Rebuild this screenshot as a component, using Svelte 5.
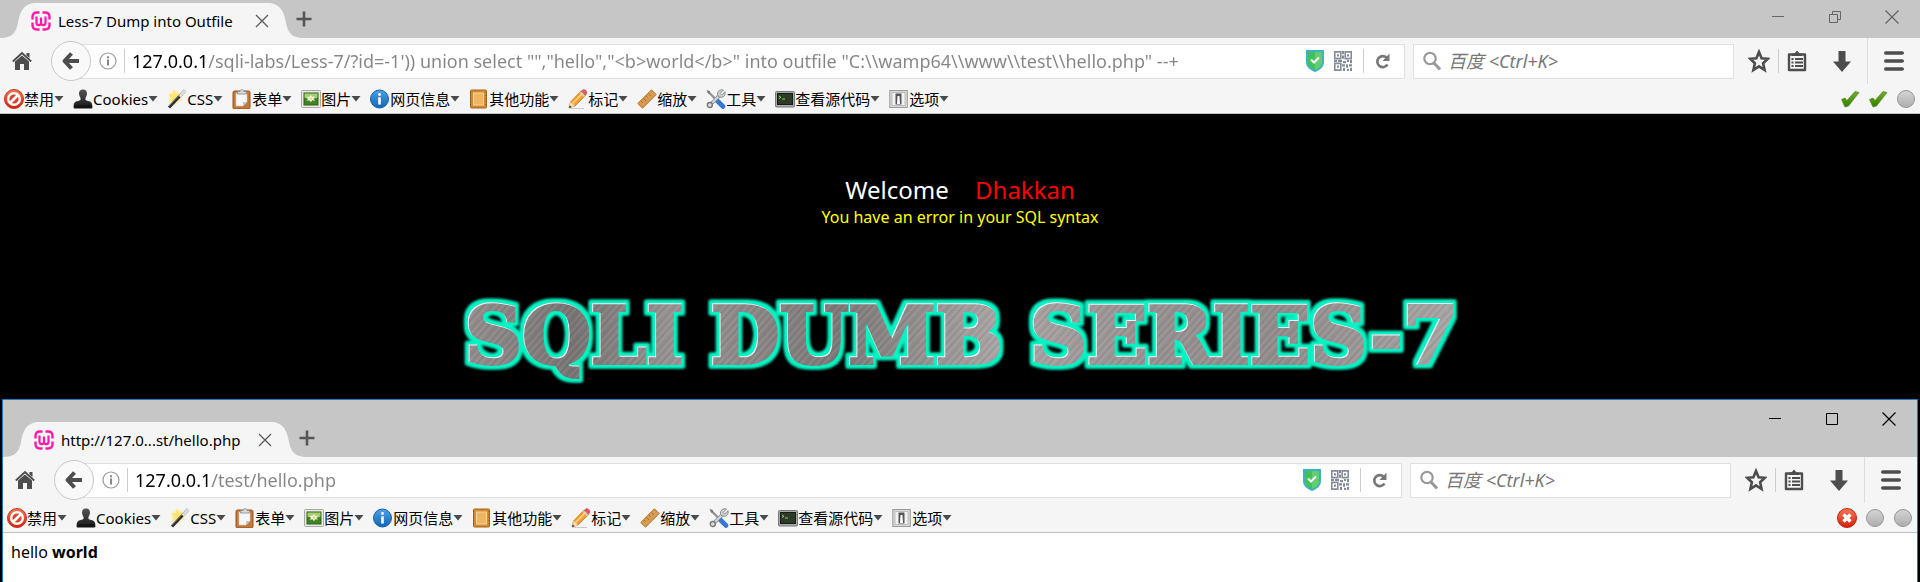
<script>
  const tools = [
    ['ban', '禁用'],
    ['user', 'Cookies'],
    ['wand', 'CSS'],
    ['form', '表单'],
    ['image', '图片'],
    ['info', '网页信息'],
    ['book', '其他功能'],
    ['pencil', '标记'],
    ['ruler', '缩放'],
    ['wrench', '工具'],
    ['terminal', '查看源代码'],
    ['switch', '选项']
  ];
</script>

{#snippet glyph(name)}
  <svg class="glyph" viewBox="0 0 20 20" width="20" height="20" aria-hidden="true">
    {#if name === 'ban'}
      <circle cx="10" cy="10" r="9.5" fill="url(#red)" stroke="#c4361f" />
      <circle cx="10" cy="10" r="5.8" fill="#d9452c" stroke="#fff" stroke-width="2.4" />
      <path d="M6 14L14 6" stroke="#fff" stroke-width="2.6" />
    {:else if name === 'user'}
      <path d="M10 0.5c3 0 4.2 2 4 4.5-.2 2-1.4 3.2-1.6 4.6-.1 1.6.4 2 2.6 2.4 3.4.5 4.4 2.2 4.4 6.2 0 1-.4 1.3-1.4 1.3H2c-1 0-1.4-.3-1.4-1.3 0-4 1-5.7 4.4-6.2 2.2-.4 2.7-.8 2.6-2.4C7.4 8.2 6.2 7 6 5c-.2-2.5 1-4.5 4-4.5z" fill="url(#dark)" />
      <path d="M2 17.5h16" stroke="#111" stroke-width="2" />
    {:else if name === 'wand'}
      <circle cx="8" cy="8" r="8" fill="url(#spark)" />
      <path d="M7 0l2 5 5-1-3 4 4 4-5-1-2 6-2-5-5 2 3-5-3-4 5 0z" fill="#ffe36a" opacity=".8" />
      <path d="M2 18.5L18 1.5" stroke="#2f2f2f" stroke-width="3" />
      <path d="M12.5 7.5L18.5 1" stroke="#ddd" stroke-width="3" />
      <path d="M2 17L12 6.5" stroke="#888" stroke-width=".8" />
    {:else if name === 'form'}
      <rect x="1" y="2" width="17" height="18" rx="1.5" fill="#c2793a" stroke="#99531c" />
      <path d="M4 4h11v9l-4 4H4z" fill="#f7f7f7" stroke="#cfcfcf" stroke-width=".6" />
      <path d="M11 17v-4h4z" fill="#bfc3c6" />
      <path d="M5.5 5V2.5h2.5C8 0 12 0 12 2.5h2.5V5z" fill="#d8d8d8" stroke="#888" stroke-width=".8" />
    {:else if name === 'image'}
      <rect x=".5" y="1.5" width="19" height="17" rx="1" fill="#e8e8e6" stroke="#a9aaa5" />
      <rect x="3" y="4" width="14" height="12" fill="#3f8420" stroke="#2e6218" />
      <path d="M3.5 4.5h13v4c-4 2-9 2-13 0z" fill="#a5ce72" />
      <path d="M10 6l1 2 3-.5-2 2 2 2-3-.3-1 2-1.5-2-3 .5 2-2-2-2 3 .3z" fill="#fff" />
      <circle cx="10" cy="9.5" r="1.3" fill="#f5d53a" />
    {:else if name === 'info'}
      <circle cx="9.5" cy="10" r="9" fill="url(#blue)" stroke="#1463ad" />
      <circle cx="9.5" cy="5.5" r="1.4" fill="#fff" />
      <path d="M9.5 8.3v7.2" stroke="#fff" stroke-width="2.6" />
    {:else if name === 'book'}
      <rect x="1.5" y="1" width="16" height="18" rx="1" fill="#d38a34" stroke="#a9651c" />
      <rect x="4.5" y="4" width="10" height="12" fill="#efb562" stroke="#f9d596" />
      <path d="M1.5 3v14M17 3v14" stroke="#8f5212" stroke-dasharray="1 2" />
    {:else if name === 'pencil'}
      <path d="M2 19.5h14" stroke="#ccc" />
      <path d="M1 19l1.5-6L13 2l4.5 4.5L7 17z" fill="#f4a02c" stroke="#c56a11" stroke-width=".7" />
      <path d="M4.5 14.5L15 4" stroke="#ffd588" stroke-width="1.6" />
      <path d="M1 19l1.5-6L7 17z" fill="#f2dcbc" />
      <path d="M1 19l.8-2.6 1.7 1.7z" fill="#222" />
      <path d="M13 2l2-1.5c2-1 5 2 4 4L17.5 6.500z" fill="#d9586c" />
      <path d="M12 3l4.5 4.5" stroke="#d5d5d5" stroke-width="1.5" />
    {:else if name === 'ruler'}
      <path d="M.8 14.5L14.500.8l4.700 4.700L5.500 19.200z" fill="#d99a52" stroke="#b47327" />
      <path d="M4 12l1.5 1.5M6.5 9.5L9 12M9 7l1.5 1.5M11.5 4.5L14 7" stroke="#9a5d1c" stroke-width=".8" />
    {:else if name === 'wrench'}
      <path d="M2 2.5L10.5 11" stroke="#8d9192" stroke-width="2.2" />
      <path d="M10.5 11l6.5 6.5" stroke="#3578cf" stroke-width="4.6" stroke-linecap="round" />
      <path d="M4 16L14.5 5.5" stroke="#8b9092" stroke-width="3.6" />
      <path d="M4 16L14.5 5.5" stroke="#d5d8d8" stroke-width="1.8" />
      <circle cx="3.8" cy="16" r="2.5" fill="#ddd" stroke="#777" stroke-width="1.4" />
      <path d="M17.5 1l-3.3 3.4 1.6 1.6L19 2.700c.8 3-1 5.600-3.800 5.600-3 0-4.300-2.200-3.600-4.600C12.300 1.300 15 .2 17.500 1z" fill="#cfd2d2" stroke="#777" stroke-width=".8" />
      <path d="M.5.8l3.5 1.5 0 2-1.6.5z" fill="#777" />
    {:else if name === 'terminal'}
      <rect x=".5" y="2.5" width="19" height="15.5" rx="1" fill="#a9aaab" stroke="#77797a" />
      <rect x="2.5" y="4.5" width="15" height="11" fill="#2c3a27" stroke="#161d14" />
      <path d="M4 7l2 1.3L4 9.5M7 10h3" fill="none" stroke="#85d649" />
    {:else}
      <rect x=".8" y="1.5" width="17.5" height="17" fill="#d9d9d9" stroke="#9c9c9c" />
      <rect x="3" y="3.5" width="13" height="13" fill="#f3f3f3" stroke="#bebebe" />
      <rect x="6.5" y="4.5" width="6" height="11" fill="#555" />
      <path d="M8 15l.5-8h2l.5 8z" fill="#fff" />
    {/if}
  </svg>
{/snippet}

{#snippet light(kind)}
  <svg class="glyph" viewBox="0 0 20 20" width="20" height="20" role="img" aria-label={kind}>
    {#if kind === 'ok'}
      <path d="M1.5 10.5l3.500-1.500 2 2.500L15 2.500l4 1L8.500 17 5 18z" fill="url(#green)" stroke="#4a8a14" stroke-width=".7" />
    {:else if kind === 'error'}
      <circle cx="10" cy="10" r="9.5" fill="url(#red)" stroke="#c5200c" />
      <path d="M6.5 6.5l7 7M13.5 6.5l-7 7" stroke="#fff" stroke-width="3.4" />
    {:else}
      <circle cx="10" cy="10" r="8.5" fill="url(#silver)" stroke="#969696" />
    {/if}
  </svg>
{/snippet}

{#snippet browser(title, host, path, lights, active)}
  <header class="strip" class:tall={active}>
    <div class="tab">
      <svg class="cap" viewBox="0 0 37 35" width="37" height="35" aria-hidden="true">
        <path d="M0 35C12 35 16 30 18 20C20 8 24 0 37 0V35z" fill="#f5f5f5" />
      </svg>
      <div class="face">
        <svg class="fav" viewBox="0 0 20 20" width="20" height="20" aria-hidden="true">
          <path d="M8.5 1.5H6C3 1.5 1.5 3 1.5 6v2.5M11.5 1.5H14c3 0 4.5 1.5 4.5 4.5v2.5M1.5 11.5V14c0 3 1.5 4.5 4.5 4.5h2.5M18.5 11.5V14c0 3-1.5 4.5-4.5 4.5h-2.5" fill="none" stroke="#ff1aa8" stroke-width="2.4" />
          <path d="M5.5 5.500v6c0 3.500 4.500 3.500 4.500 0V6.500v5c0 3.500 4.500 3.500 4.500 0v-6" fill="none" stroke="#ff1aa8" stroke-width="2.2" />
        </svg>
        <span class="title">{title}</span>
        <button class="bare" aria-label="Close tab">
          <svg viewBox="0 0 14 14" width="14" height="14"><path d="M1 1l12 12M13 1L1 13" stroke="#5a5a5a" stroke-width="1.3" /></svg>
        </button>
      </div>
      <svg class="cap" viewBox="0 0 37 35" width="37" height="35" aria-hidden="true">
        <path d="M37 35C25 35 21 30 19 20C17 8 13 0 0 0V35z" fill="#f5f5f5" />
      </svg>
    </div>
    <button class="bare plus" aria-label="New tab">
      <svg viewBox="0 0 16 16" width="16" height="16"><path d="M8 .5v15M.5 8h15" stroke="#555" stroke-width="2.6" /></svg>
    </button>
    <div class="caption" class:dim={!active}>
      <button class="bare" aria-label="Minimize"><svg viewBox="0 0 14 14" width="14" height="14"><path d="M1 6.5h12" stroke="currentColor" /></svg></button>
      <button class="bare" aria-label="Resize">
        <svg viewBox="0 0 14 14" width="14" height="14" fill="none" stroke="currentColor">
          {#if active}<path d="M1.5 1.5h11v11h-11z" />{:else}<path d="M1.5 4.5h8v8h-8zM4.5 4V1.5h8v8H10" />{/if}
        </svg>
      </button>
      <button class="bare" aria-label="Close"><svg viewBox="0 0 14 14" width="14" height="14"><path d="M.5.5l13 13M13.5.5l-13 13" stroke="currentColor" stroke-width="1.2" /></svg></button>
    </div>
  </header>

  <nav class="nav">
    <button class="bare home" aria-label="Home">
      <svg viewBox="0 0 20 20" width="20" height="20"><path d="M.8 10.5L10 2l9.2 8.5" fill="none" stroke="#4d4d4d" stroke-width="1.8" /><path d="M14.5 2h3v5l-3-2.5zM3 10.5L10 4.5l7 6V19h-5v-6H8v6H3z" fill="#4d4d4d" /></svg>
    </button>
    <button class="back" aria-label="Back">
      <svg viewBox="0 0 20 20" width="20" height="20"><path d="M10.5 2.5L3.5 10l7 7.5M4.5 10H18" fill="none" stroke="#4d4d4d" stroke-width="4" stroke-linejoin="round" /></svg>
    </button>
    <div class="field address">
      <svg viewBox="0 0 18 18" width="18" height="18" aria-hidden="true"><circle cx="9" cy="9" r="8" fill="none" stroke="#999" stroke-width="1.2" /><path d="M9 7.5v6M9 4.2v2" stroke="#888" stroke-width="2" /></svg>
      <i class="bar"></i>
      <input class="url" aria-label="Address" value={host + path} />
      <svg viewBox="0 0 18 22" width="18" height="22" aria-hidden="true"><path d="M0 0h18v12c0 5-4 8-9 10-5-2-9-5-9-10z" fill="#3cb3c3" /><path d="M2 2h14v10c0 4-3 6-7 8-4-2-7-4-7-8z" fill="#41c05b" /><path d="M9 2h7v10c0 4-3 6-7 8z" fill="#63cd6f" /><path d="M5 9.5l3 3 5-5" fill="none" stroke="#fff" stroke-width="2" /></svg>
      <svg class="qr" viewBox="0 0 18 18" width="18" height="20" preserveAspectRatio="none" aria-hidden="true">
        <g fill="none" stroke="#858c98" stroke-width="1.6"><path d="M.8.8h6v6h-6zM11.2.8h6v6h-6zM.8 11.2h6v6h-6z" /></g>
        <path d="M3 3h2v2H3zM13 3h2v2h-2zM3 13h2v2H3zM8 0h2v3H8zM8 4h2v3H8zM0 8h3v2H0zM4 8h4v2H4zM9 9h3v2H9zM13 8h2v2h-2zM16 8h2v3h-2zM8 12h3v2H8zM12 12h2v3h-2zM15 12h3v2h-3zM9 15h2v3H9zM13 16h2v2h-2zM16 15h2v3h-2z" fill="#858c98" />
      </svg>
      <i class="bar"></i>
      <button class="bare reload" aria-label="Reload">
        <svg viewBox="0 0 16 18" width="16" height="18"><path d="M12.5 12.5A5.5 5.5 0 1 1 11.5 5.5" fill="none" stroke="#777" stroke-width="2.6" /><path d="M14.5 1.5V9H7.5z" fill="#777" /></svg>
      </button>
    </div>
    <div class="field search">
      <svg viewBox="0 0 18 20" width="18" height="20" aria-hidden="true"><circle cx="7" cy="7.5" r="5.7" fill="none" stroke="#999" stroke-width="2.2" /><path d="M11 12l6 6.5" stroke="#999" stroke-width="3" /></svg>
      <input class="find" aria-label="Search" placeholder="百度 <Ctrl+K>" />
    </div>
    <div class="actions">
      <button class="bare star" aria-label="Bookmark">
        <svg viewBox="0 0 22 24" width="22" height="24"><path d="M11 3l2.600 6.300 6.200.5-4.700 4.400 1.500 6.800L11 17.400 5.400 21l1.500-6.800L2.200 9.800l6.200-.5z" fill="none" stroke="#4d4d4d" stroke-width="2.6" /></svg>
      </button>
      <i class="bar small"></i>
      <button class="bare clip" aria-label="Bookmarks list">
        <svg viewBox="0 0 20 22" width="20" height="22"><path d="M2 4.5h16v15.5H2z" fill="none" stroke="#4d4d4d" stroke-width="2.4" stroke-linejoin="round" /><path d="M5 6V3.5h2.5L10 .5l2.5 3H15V6z" fill="#4d4d4d" /><path d="M4.5 9h2M8 9h8M4.5 12.5h2M8 12.5h8M4.5 16h2M8 16h8" stroke="#4d4d4d" stroke-width="2" /></svg>
      </button>
      <button class="bare down" aria-label="Downloads">
        <svg viewBox="0 0 18 22" width="18" height="22"><path d="M5.5 1h7v10.5H18L9 22 0 11.5h5.5z" fill="#4d4d4d" /></svg>
      </button>
      <i class="bar long"></i>
      <button class="bare menu" aria-label="Menu">
        <svg viewBox="0 0 20 20" width="20" height="20"><path d="M1.8 2h16.400M1.800 10h16.400M1.800 18h16.400" stroke="#4d4d4d" stroke-width="3.6" stroke-linecap="round" /></svg>
      </button>
    </div>
  </nav>

  <div class="tools">
    {#each tools as [icon, label]}
      <button class="tool">
        {@render glyph(icon)}<span>{label}</span>
        <svg class="arrow" viewBox="0 0 10 6" width="10" height="6" aria-hidden="true"><path d="M.5 0h9L5 5.5z" fill="#4a4a4a" /></svg>
      </button>
    {/each}
    <div class="lights">
      {#each lights as kind}{@render light(kind)}{/each}
    </div>
  </div>
{/snippet}

<svg class="defs" width="0" height="0" aria-hidden="true">
  <defs>
    <linearGradient id="red" x2="0" y2="1"><stop stop-color="#f47a55" /><stop offset="1" stop-color="#d3200c" /></linearGradient>
    <linearGradient id="dark" x2="0" y2="1"><stop stop-color="#555" /><stop offset="1" stop-color="#151515" /></linearGradient>
    <linearGradient id="blue" x2="0" y2="1"><stop stop-color="#4ea1e6" /><stop offset="1" stop-color="#1165b6" /></linearGradient>
    <linearGradient id="green" x2="0" y2="1"><stop stop-color="#74ad30" /><stop offset="1" stop-color="#337f00" /></linearGradient>
    <linearGradient id="silver" x2="0" y2="1"><stop stop-color="#d6d6d6" /><stop offset="1" stop-color="#adadad" /></linearGradient>
    <radialGradient id="spark"><stop stop-color="#ffe04d" /><stop offset="1" stop-color="#ffe97a" stop-opacity="0" /></radialGradient>
  </defs>
</svg>

<div class="desk">
  <section class="rear">
    {@render browser('Less-7 Dump into Outfile', '127.0.0.1', `/sqli-labs/Less-7/?id=-1')) union select "","hello","<b>world</b>" into outfile "C:\\\\wamp64\\\\www\\\\test\\\\hello.php" --+`, ['ok', 'ok', 'idle'], false)}
    <main class="lab">
      <p class="welcome">Welcome <span>Dhakkan</span></p>
      <p class="error">You have an error in your SQL syntax</p>
      <h1>
        <svg viewBox="0 0 1020 110" width="1020" height="110">
          <defs>
            <linearGradient id="steel" x2="1" y2="0">
              <stop stop-color="#969090" /><stop offset=".12" stop-color="#787373" /><stop offset=".22" stop-color="#989292" />
              <stop offset=".38" stop-color="#7c7777" /><stop offset=".54" stop-color="#aaa4a4" /><stop offset=".68" stop-color="#969090" />
              <stop offset=".82" stop-color="#918b8b" /><stop offset="1" stop-color="#aaa6a6" />
            </linearGradient>
            <pattern id="brush" width="17" height="300" patternUnits="userSpaceOnUse" patternTransform="rotate(42)">
              <path d="M1 0v300M6 0v300M13 0v300" stroke="#fff" stroke-opacity=".13" />
              <path d="M3.5 0v300M10 0v300M15 0v300" stroke="#222" stroke-opacity=".1" />
            </pattern>
            <pattern id="metal" width="1020" height="110" patternUnits="userSpaceOnUse">
              <rect width="1020" height="110" fill="url(#steel)" />
              <rect width="1020" height="110" fill="url(#brush)" />
            </pattern>
            <filter id="neon" x="0" y="0" width="1020" height="110" filterUnits="userSpaceOnUse" color-interpolation-filters="sRGB">
              <feMorphology in="SourceAlpha" operator="dilate" radius="3" result="fat" />
              <feGaussianBlur in="fat" stdDeviation="1.7" result="soft" />
              <feFlood flood-color="#00f5c4" />
              <feComposite in2="soft" operator="in" result="glow" />
              <feOffset in="SourceAlpha" dx="1" dy="1" result="shift" />
              <feFlood flood-color="#e8ffff" />
              <feComposite in2="SourceAlpha" operator="in" result="white" />
              <feComposite in="white" in2="shift" operator="out" result="edge" />
              <feMerge><feMergeNode in="glow" /><feMergeNode in="glow" /><feMergeNode in="SourceGraphic" /><feMergeNode in="edge" /></feMerge>
            </filter>
          </defs>
          <text x="511" y="76" text-anchor="middle" filter="url(#neon)">SQLI DUMB SERIES-7</text>
        </svg>
      </h1>
    </main>
  </section>
  <section class="front">
    {@render browser('http://127.0...st/hello.php', '127.0.0.1', '/test/hello.php', ['error', 'idle', 'idle'], true)}
    <main class="plain">hello <b>world</b></main>
  </section>
</div>

<style>
  :global(body) {
    background: #000;
  }
  .defs {
    position: absolute;
  }
  .desk {
    min-height: 100vh;
    display: flex;
    flex-direction: column;
    font: 15px/20px 'Noto Sans', 'Noto Sans CJK SC', sans-serif;
    color: #000;
  }
  svg {
    display: block;
    flex: none;
  }
  .bare {
    border: 0;
    padding: 0;
    background: none;
    display: flex;
    color: inherit;
  }
  .strip {
    height: 38px;
    background: #c6c6c6;
    display: flex;
    align-items: flex-end;
  }
  .strip.tall {
    height: 57px;
  }
  .tab {
    width: 304px;
    display: flex;
  }
  .face {
    flex: 1;
    min-width: 0;
    height: 35px;
    background: #f5f5f5;
    display: flex;
    align-items: center;
  }
  .fav {
    margin-left: -6px;
    margin-right: 7px;
    z-index: 1;
  }
  .title {
    flex: 1;
    white-space: nowrap;
  }
  .face .bare {
    margin-right: -2px;
    z-index: 1;
  }
  .plus {
    margin: 0 auto 11px -8px;
  }
  .caption {
    align-self: flex-start;
    display: flex;
    gap: 43px;
    padding: 10px 21px 0 0;
    color: #000;
  }
  .tall .caption {
    padding-top: 12px;
  }
  .caption.dim {
    color: #666;
  }
  .nav {
    height: 46px;
    background: #f5f5f5;
    display: flex;
    align-items: center;
  }
  .home {
    margin: 0 19px 0 12px;
  }
  .back {
    width: 40px;
    height: 40px;
    margin-right: -20px;
    padding: 0;
    border: 1px solid #c8c8c8;
    border-radius: 50%;
    background: #f9f9f9;
    display: flex;
    align-items: center;
    justify-content: center;
    z-index: 1;
  }
  .field {
    box-sizing: border-box;
    height: 35px;
    background: #fff;
    border: 1px solid #e0e0e0;
    display: flex;
    align-items: center;
  }
  .address {
    flex: 1;
    min-width: 0;
    padding: 0 13px 0 27px;
  }
  .bar {
    width: 1px;
    height: 24px;
    background: #ccc;
    margin: 0 7px;
  }
  input {
    flex: 1;
    min-width: 0;
    border: 0;
    padding: 0;
    outline: 0;
    font: 18px/24px 'Noto Sans', 'Noto Sans CJK SC', sans-serif;
  }
  .url {
    background: linear-gradient(90deg, #000 76px, #858585 76px);
    -webkit-background-clip: text;
    background-clip: text;
    -webkit-text-fill-color: transparent;
    caret-color: #000;
  }
  .qr {
    margin: 0 4px 0 10px;
  }
  .reload {
    margin-left: 4px;
  }
  .search {
    width: 321px;
    margin-left: 8px;
    padding: 0 9px;
    gap: 7px;
  }
  .find {
    background: none;
  }
  .find::placeholder {
    color: #777;
    font-style: italic;
    opacity: 1;
  }
  .actions {
    display: flex;
    align-items: center;
    padding: 0 16px 0 14px;
  }
  .bar.small {
    margin: 0 8px;
  }
  .down {
    margin: 0 16px 0 26px;
  }
  .bar.long {
    height: 46px;
    margin: 0 16px 0 0;
    background: #ddd;
  }
  .tools {
    height: 29px;
    background: #f5f5f5;
    border-bottom: 1px solid #bfc3bf;
    display: flex;
    align-items: center;
    gap: 9px;
    padding: 0 4px;
  }
  .tool {
    display: flex;
    align-items: center;
    border: 0;
    padding: 0;
    background: none;
    font: inherit;
    color: #000;
    white-space: nowrap;
  }
  .lights {
    margin-left: auto;
    display: flex;
    gap: 8px;
  }
  .lab {
    background: #000;
    text-align: center;
    padding: 60px 0 2px;
  }
  .lab p {
    margin: 0;
  }
  .welcome {
    font-size: 24px;
    line-height: 32px;
    color: #fff;
  }
  .welcome span {
    color: #f00;
    margin-left: 20px;
  }
  .error {
    font-size: 16px;
    line-height: 22px;
    color: #ff0;
  }
  h1 {
    margin: 59px 0 0;
    display: flex;
    justify-content: center;
  }
  h1 svg {
    max-width: 100%;
  }
  h1 text {
    font: bold 79px 'DejaVu Serif', serif;
    fill: url(#metal);
    stroke: url(#metal);
    stroke-width: 4px;
  }
  .front {
    flex: 1;
    display: flex;
    flex-direction: column;
    margin: 0 2px;
    border: 1px solid #1979ca;
    border-bottom: 0;
    background: #fff;
  }
  .plain {
    padding: 8px;
    font-size: 16px;
    line-height: 22px;
  }
</style>
